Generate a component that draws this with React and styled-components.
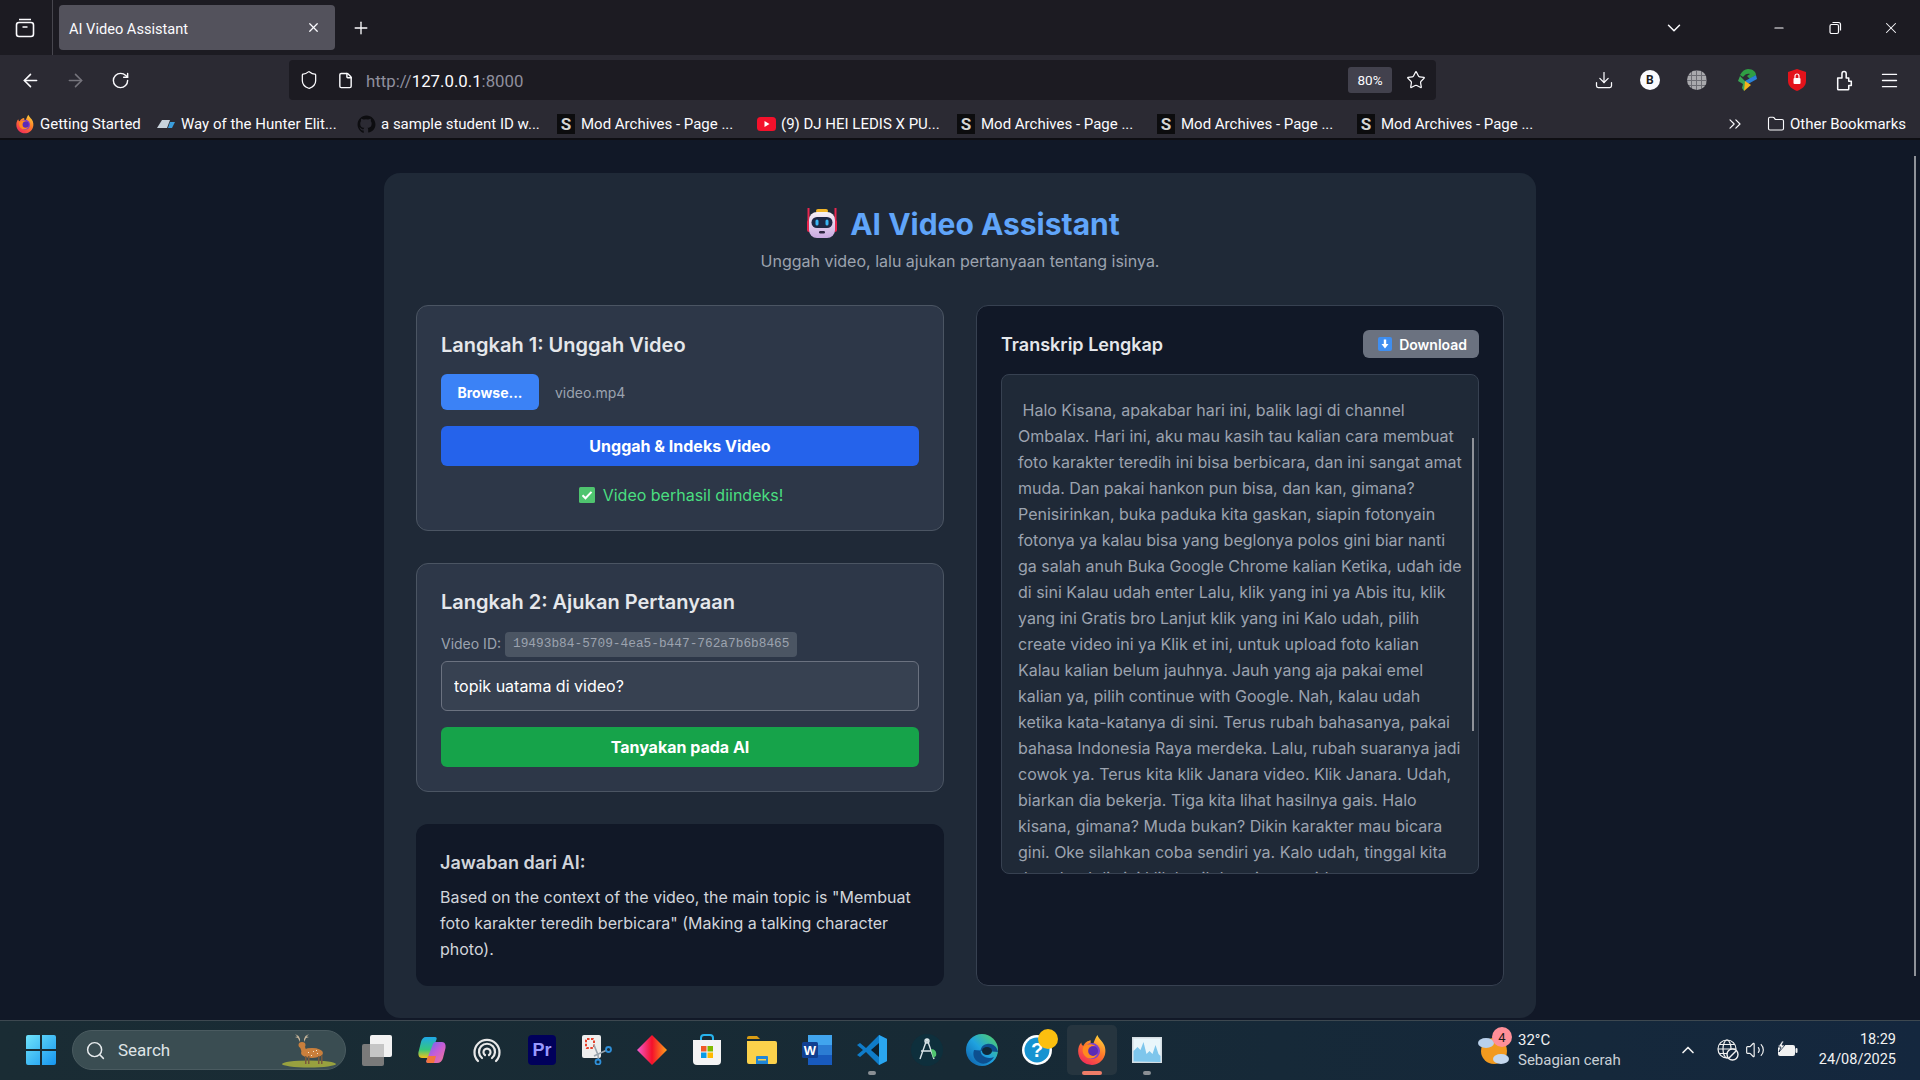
import React from 'react';
import styled, { createGlobalStyle } from 'styled-components';
import {
  ArrowLeft, ArrowRight, RotateCw, Shield, File, Star, Download, Menu, Folder,
  ChevronDown, ChevronUp, ChevronsRight, Minus, X, Plus, Search, Volume2,
} from 'lucide-react';

const GlobalStyle = createGlobalStyle`
  html, body { margin: 0; padding: 0; height: 100%; overflow: hidden; background: #111827; }
  #root { height: 100%; }
  * { box-sizing: border-box; }
`;

const transcript = ` Halo Kisana, apakabar hari ini, balik lagi di channel Ombalax. Hari ini, aku mau kasih tau kalian cara membuat foto karakter teredih ini bisa berbicara, dan ini sangat amat muda. Dan pakai hankon pun bisa, dan kan, gimana? Penisirinkan, buka paduka kita gaskan, siapin fotonyain fotonya ya kalau bisa yang beglonya polos gini biar nanti ga salah anuh Buka Google Chrome kalian Ketika, udah ide di sini Kalau udah enter Lalu, klik yang ini ya Abis itu, klik yang ini Gratis bro Lanjut klik yang ini Kalo udah, pilih create video ini ya Klik et ini, untuk upload foto kalian Kalau kalian belum jauhnya. Jauh yang aja pakai emel kalian ya, pilih continue with Google. Nah, kalau udah ketika kata-katanya di sini. Terus rubah bahasanya, pakai bahasa Indonesia Raya merdeka. Lalu, rubah suaranya jadi cowok ya. Terus kita klik Janara video. Klik Janara. Udah, biarkan dia bekerja. Tiga kita lihat hasilnya gais. Halo kisana, gimana? Muda bukan? Dikin karakter mau bicara gini. Oke silahkan coba sendiri ya. Kalo udah, tinggal kita download di sini klik hasil dan simpan videonya ya guys`;

const bookmarks = [
  { label: 'Getting Started', icon: 'fx', width: 142 },
  { label: 'Way of the Hunter Elit...', icon: 'way' },
  { label: 'a sample student ID w...', icon: 'github' },
  { label: 'Mod Archives - Page ...', icon: 's' },
  { label: '(9) DJ HEI LEDIS X PU...', icon: 'yt' },
  { label: 'Mod Archives - Page ...', icon: 's' },
  { label: 'Mod Archives - Page ...', icon: 's' },
  { label: 'Mod Archives - Page ...', icon: 's' },
];

/* ---------- drawn icons ---------- */

const FirefoxIcon = ({ size = 30 }) => (
  <svg width={size} height={size} viewBox="0 0 30 30">
    <defs>
      <linearGradient id="fxa" x1="0.8" y1="0" x2="0.2" y2="1">
        <stop offset="0" stopColor="#ffd53a" />
        <stop offset="0.45" stopColor="#ff7a2a" />
        <stop offset="1" stopColor="#f0265c" />
      </linearGradient>
    </defs>
    <path d="M20 1c1 3 3 4 5 7 3 4 3 9 2 12-2 6-7 9-12 9C8 29 2 24 2 16c0-3 1-6 3-8 0 2 1 3 2 3 1-3 4-5 7-5-1 2 0 3 2 4 1-3 2-6 4-9z" fill="url(#fxa)" />
    <circle cx="15" cy="16" r="7.5" fill="#7a3fd0" />
    <path d="M7 12c3-3 8-3 11-1-3 0-5 1-5 3 0 3 6 2 7 5-2 4-7 5-10 3-3-2-5-6-3-10z" fill="#ff8a1f" />
    <circle cx="16" cy="16" r="4.6" fill="#5b2bb5" />
  </svg>
);

const RobotIcon = () => (
  <svg width="42" height="36" viewBox="-1 0 42 36">
    <defs>
      <linearGradient id="rb" x1="0" y1="0" x2="0" y2="1">
        <stop offset="0" stopColor="#f7f1f6" />
        <stop offset="1" stopColor="#c9a8e0" />
      </linearGradient>
    </defs>
    <rect x="6.5" y="3" width="2" height="14" fill="#e8264f" />
    <rect x="33.5" y="3" width="2" height="14" fill="#e8264f" />
    <rect x="6" y="15" width="4" height="12" rx="2" fill="#e8264f" />
    <rect x="32" y="15" width="4" height="12" rx="2" fill="#e8264f" />
    <rect x="15" y="4" width="12" height="4" rx="2" fill="#f0b429" />
    <rect x="8" y="7" width="26" height="26" rx="8" fill="url(#rb)" />
    <rect x="10.5" y="12" width="21" height="11" rx="5.5" fill="#1e2744" />
    <rect x="14.5" y="14.5" width="3" height="6" rx="1.5" fill="#38b6f5" />
    <rect x="24.5" y="14.5" width="3" height="6" rx="1.5" fill="#38b6f5" />
    <rect x="18" y="26" width="6" height="2.6" rx="1.3" fill="#2d2540" />
  </svg>
);

const CheckEmoji = () => (
  <svg width="16" height="16" viewBox="0 0 16 16">
    <rect width="16" height="16" rx="1.5" fill="#4fc46f" />
    <path d="M3.5 8.3l3 3 6-6.4" fill="none" stroke="#fff" strokeWidth="2" />
  </svg>
);

const DownEmoji = () => (
  <svg width="14" height="14" viewBox="0 0 14 14">
    <rect width="14" height="14" rx="2" fill="#3f8ef0" />
    <path d="M5.8 2.5h2.4v4.5h2.3L7 11.4 3.5 7h2.3z" fill="#fff" />
  </svg>
);

const TabListIcon = () => (
  <svg width="20" height="20" viewBox="0 0 20 20" fill="none" stroke="#fbfbfe" strokeWidth="1.6">
    <rect x="1.5" y="4.5" width="17" height="14" rx="2.5" />
    <path d="M4 1.5h12M7.5 9h5" />
  </svg>
);

const RestoreIcon = () => (
  <svg width="14" height="14" viewBox="0 0 14 14" fill="none" stroke="#fbfbfe" strokeWidth="1.2">
    <rect x="2" y="3.5" width="8.5" height="9" rx="1.5" />
    <path d="M4.5 1.5h6a2 2 0 0 1 2 2v6" />
  </svg>
);

const PuzzleIcon = () => (
  <svg width="17" height="21" viewBox="0 0 20 24" fill="none" stroke="#fbfbfe" strokeWidth="1.8" strokeLinejoin="round">
    <path d="M2 9h5V4a2.5 2.5 0 0 1 5 0v5h3v4h3v5h-3v4a1 1 0 0 1-1 1H3a1 1 0 0 1-1-1z" />
  </svg>
);

const IdmIcon = () => (
  <svg width="22" height="24" viewBox="0 0 22 24">
    <path d="M12 1c5 0 8 3 8 6l-6 4-3-3 3-2c-2-1-5 0-7 3L4 7c2-4 5-6 8-6z" fill="#2f9e44" />
    <path d="M20 7l1 4-9 5-3-3z" fill="#2a7fd6" />
    <path d="M4 8l5 5 3 3-4 7-2-3 1-4-5-3z" fill="#3aa655" />
    <path d="M9 13l6 4-7 6z" fill="#f2b41b" />
  </svg>
);

const BookmarkIcon = ({ kind }) => {
  if (kind === 'fx') return <FirefoxIcon size={20} />;
  if (kind === 'way') {
    return (
      <svg width="18" height="10" viewBox="0 0 18 10">
        <path d="M0 9L5 1h4L6 9zM6 9l3-8h4l-3 8z" fill="#c9d3dc" />
        <path d="M11 9l2-6h5l-3 6z" fill="#3a9ddc" />
      </svg>
    );
  }
  if (kind === 'github') {
    return (
      <svg width="19" height="19" viewBox="3.5 3.5 17 17">
        <path d="M12 4C7.6 4 4 7.6 4 12c0 3.5 2.3 6.5 5.5 7.6v-2.3c-2.2.5-2.7-1-2.7-1-.4-.9-.9-1.2-.9-1.2-.7-.5.1-.5.1-.5.8.1 1.2.8 1.2.8.7 1.2 1.9.9 2.3.7.1-.5.3-.9.5-1.1-1.8-.2-3.6-.9-3.6-4 0-.9.3-1.6.8-2.1-.1-.2-.4-1 .1-2.1 0 0 .7-.2 2.2.8a7.6 7.6 0 0 1 4 0c1.5-1 2.2-.8 2.2-.8.4 1.100.2 1.900.1 2.100.5.6.8 1.300.8 2.100 0 3.100-1.900 3.800-3.700 4 .3.3.6.8.6 1.500v2.700C17.700 18.500 20 15.500 20 12c0-4.400-3.600-8-8-8z" fill="#0d0d10" />
      </svg>
    );
  }
  if (kind === 'yt') {
    return (
      <svg width="19" height="14" viewBox="0 0 19 14">
        <rect width="19" height="14" rx="3.5" fill="#f4112b" />
        <path d="M7.5 4l5 3-5 3z" fill="#fff" />
      </svg>
    );
  }
  return <ModS>S</ModS>;
};

const WinLogo = () => (
  <svg width="30" height="30" viewBox="0 0 30 30">
    <defs>
      <linearGradient id="wn" x1="0" y1="0" x2="1" y2="1">
        <stop offset="0" stopColor="#6fe3fb" />
        <stop offset="1" stopColor="#1695ee" />
      </linearGradient>
    </defs>
    <path d="M0 2a2 2 0 0 1 2-2h12v14H0zM16 0h12a2 2 0 0 1 2 2v12H16zM0 16h14v14H2a2 2 0 0 1-2-2zM16 16h14v12a2 2 0 0 1-2 2H16z" fill="url(#wn)" />
  </svg>
);

const Deer = () => (
  <svg width="58" height="36" viewBox="0 0 58 36">
    <ellipse cx="28" cy="31" rx="27" ry="3.5" fill="#98a13f" />
    <path d="M19 9l-2-4-3-1 2.5-.5L14 1l3.5 2L19 6zM23 9l2-4 3-1-2.5-.5L28 1l-3.500 2L23 6z" fill="#c9b79c" />
    <ellipse cx="21" cy="12" rx="3.5" ry="3" fill="#c97f3c" />
    <path d="M19 14h5l2 5-5 1z" fill="#c97f3c" />
    <ellipse cx="31" cy="20" rx="11" ry="5" fill="#c97f3c" />
    <path d="M27 19h1v1h-1zM32 18h1v1h-1zM36 20h1v1h-1zM30 22h1v1h-1zM35 17h1v1h-1z" fill="#f6e7cf" />
    <path d="M24 23h1.5v8H24zM27 23h1.5v8H27zM37 23h1.5v8H37zM40 22h1.5v9H40z" fill="#7a5a3c" />
  </svg>
);

const Stacked = () => (
  <svg width="32" height="32" viewBox="0 0 32 32">
    <rect x="1" y="10" width="22" height="22" rx="2" fill="#7a7a7a" />
    <rect x="9" y="1" width="22" height="22" rx="2" fill="#f2f2f2" />
    <rect x="9" y="10" width="14" height="13" fill="#c6c6c6" />
  </svg>
);

const Copilot = () => (
  <svg width="28" height="28" viewBox="0 0 28 28">
    <defs>
      <linearGradient id="cpa" x1="0" y1="0" x2="0" y2="1">
        <stop offset="0" stopColor="#1fa8e8" />
        <stop offset="0.6" stopColor="#35c77e" />
        <stop offset="1" stopColor="#f2c21b" />
      </linearGradient>
      <linearGradient id="cpb" x1="0" y1="0" x2="1" y2="1">
        <stop offset="0" stopColor="#5b6df0" />
        <stop offset="0.5" stopColor="#c65cd8" />
        <stop offset="1" stopColor="#f6788c" />
      </linearGradient>
    </defs>
    <path d="M8 1h9c1.5 0 2 1 1.5 2.5L12 20c-.7 1.5-2 2-3 2H4c-3 0-4-3-3.500-6L3 6c.7-3 2.500-5 5-5z" fill="url(#cpa)" />
    <path d="M19 27h-9c-1.5 0-2-1-1.5-2.5L15 8c.7-1.5 2-2 3-2h6c3 0 4 3 3.500 6L25 22c-.7 3-3 5-6 5z" fill="url(#cpb)" />
    <path d="M10 20h8l-2 7h-6c-1.5 0-2-1-1.5-2.5z" fill="#f2763c" />
  </svg>
);

const Broadcast = () => (
  <svg width="28" height="28" viewBox="0 0 28 28" fill="none" stroke="#e8e8e8" strokeWidth="2.2" strokeLinecap="round">
    <path d="M5 25A12.5 12.5 0 1 1 23 25" />
    <path d="M9 22a8 8 0 1 1 10 0" />
    <path d="M12 19a3.5 3.5 0 1 1 4 0" />
  </svg>
);

const Premiere = () => <PrTile>Pr</PrTile>;

const Snip = () => (
  <svg width="30" height="30" viewBox="0 0 30 30">
    <rect x="0" y="0" width="19" height="23" rx="2" fill="#eeeeee" />
    <rect x="4" y="4" width="8" height="9" rx="1" fill="none" stroke="#e8412c" strokeWidth="2" strokeDasharray="2.5 1.5" />
    <path d="M12 10l4 10 .5 5M25 15l-13 6" fill="none" stroke="#9aa4ad" strokeWidth="1.6" />
    <circle cx="26.5" cy="14.5" r="2.5" fill="none" stroke="#2f8fd8" strokeWidth="1.8" />
    <circle cx="16" cy="27" r="2.5" fill="none" stroke="#2f8fd8" strokeWidth="1.8" />
  </svg>
);

const Diamond = () => (
  <svg width="30" height="30" viewBox="0 0 30 30">
    <defs>
      <linearGradient id="dm" x1="0" y1="0" x2="1" y2="0">
        <stop offset="0" stopColor="#f25bd0" />
        <stop offset="0.5" stopColor="#f4112b" />
        <stop offset="1" stopColor="#ffa21a" />
      </linearGradient>
    </defs>
    <path d="M15 0l15 15-15 15L0 15z" fill="url(#dm)" />
  </svg>
);

const StoreIcon = () => (
  <svg width="30" height="32" viewBox="0 0 30 32">
    <path d="M9 7V4a3 3 0 0 1 3-3h6a3 3 0 0 1 3 3v3" fill="none" stroke="#27b4ee" strokeWidth="2" />
    <path d="M1 6h28v21a4 4 0 0 1-4 4H5a4 4 0 0 1-4-4z" fill="#f4f4f4" />
    <rect x="9" y="12" width="5.5" height="5.5" fill="#f05a28" />
    <rect x="15.5" y="12" width="5.5" height="5.5" fill="#7fba00" />
    <rect x="9" y="18.5" width="5.5" height="5.5" fill="#0a9be6" />
    <rect x="15.5" y="18.5" width="5.5" height="5.5" fill="#ffb900" />
  </svg>
);

const FolderIcon = () => (
  <svg width="30" height="28" viewBox="0 0 30 28">
    <path d="M0 2a2 2 0 0 1 2-2h8l3 3h-13z" fill="#d99c13" />
    <path d="M0 5h28a2 2 0 0 1 2 2v19a2 2 0 0 1-2 2H2a2 2 0 0 1-2-2z" fill="#fbd14b" />
    <path d="M9 28v-7a1 1 0 0 1 1-1h10a1 1 0 0 1 1 1v7z" fill="#1f86d8" />
    <rect x="11" y="23" width="8" height="1.5" fill="#fbd14b" />
  </svg>
);

const WordIcon = () => (
  <svg width="30" height="30" viewBox="0 0 30 30">
    <rect x="6" y="0" width="24" height="10" fill="#41a5ee" />
    <rect x="6" y="10" width="24" height="10" fill="#2b7cd3" />
    <rect x="6" y="20" width="24" height="10" fill="#185abd" />
    <rect x="0" y="7" width="16" height="16" rx="1.5" fill="#103f91" />
    <text x="8" y="20" textAnchor="middle" fontFamily="Liberation Sans, sans-serif" fontWeight="700" fontSize="13" fill="#fff">W</text>
  </svg>
);

const VsCode = () => (
  <svg width="32" height="32" viewBox="0 0 32 32">
    <path d="M23 1l8 4v22l-8 4-13-13-6 5-3-2 6-5-6-5 3-2 6 5z" fill="#0f7cc9" />
    <path d="M23 1l8 4v22l-8 4z" fill="#2aa6f0" />
    <path d="M23 9l-8 7 8 7z" fill="#0d1f2b" />
  </svg>
);

const AndroidStudio = () => (
  <svg width="32" height="32" viewBox="0 0 32 32">
    <circle cx="16" cy="16" r="16" fill="#0e2f3c" />
    <path d="M16 5l-7 20M16 5l7 20M10 17h12" stroke="#d8e4e8" strokeWidth="1.4" fill="none" />
    <circle cx="16" cy="7" r="2" fill="none" stroke="#d8e4e8" strokeWidth="1.4" />
    <path d="M20 15c4 0 6 3 5 7l-3 2z" fill="#4fc46f" />
  </svg>
);

const EdgeIcon = () => (
  <svg width="32" height="34" viewBox="0 0 32 34">
    <defs>
      <linearGradient id="ed" x1="0" y1="1" x2="1" y2="0">
        <stop offset="0" stopColor="#0c59a4" />
        <stop offset="0.5" stopColor="#1fa2e0" />
        <stop offset="1" stopColor="#59d65a" />
      </linearGradient>
    </defs>
    <circle cx="16" cy="17" r="16" fill="url(#ed)" />
    <path d="M32 19c-1-6-6-9-11-8-6 1-8 7-5 11 3 3 8 4 12 2-3 5-9 8-14 6-5-2-8-7-6-13" fill="#0d4f8f" />
    <ellipse cx="21" cy="18" rx="5" ry="4" fill="#102838" />
  </svg>
);

const HelpIcon = () => (
  <svg width="44" height="44" viewBox="0 0 44 44">
    <circle cx="22" cy="22" r="15" fill="#fff" />
    <circle cx="22" cy="22" r="12.5" fill="#1793d1" />
    <text x="22" y="29" textAnchor="middle" fontFamily="Liberation Sans, sans-serif" fontWeight="700" fontSize="20" fill="#fff">?</text>
    <circle cx="33" cy="11" r="10" fill="#fbbf0f" />
  </svg>
);

const MonitorIcon = () => (
  <svg width="30" height="26" viewBox="0 0 30 26">
    <rect width="30" height="26" fill="#d5dde2" />
    <rect x="1.5" y="1.5" width="27" height="23" fill="#e9f6fb" />
    <path d="M1.5 24.5V14l4-4 3 3 3-8 3 12 3-3 3 3 3-9 3 9 2 2v6z" fill="#7ec6ec" />
  </svg>
);

const Weather = () => (
  <svg width="32" height="34" viewBox="0 0 32 34">
    <circle cx="16" cy="18" r="13" fill="#f29a1f" />
    <ellipse cx="8" cy="10" rx="8" ry="5" fill="#b9d0ea" />
    <ellipse cx="23" cy="26" rx="8" ry="5" fill="#c5d8ee" />
  </svg>
);

const GlobeOff = () => (
  <svg width="22" height="22" viewBox="0 0 22 22" fill="none" stroke="#f2f2f2" strokeWidth="1.2">
    <circle cx="10" cy="10" r="9" />
    <ellipse cx="10" cy="10" rx="4" ry="9" />
    <path d="M1 10h18M2.5 5.5h15M2.5 14.5h8" />
    <circle cx="15.5" cy="15.5" r="5.5" fill="#14273d" strokeWidth="1.4" />
    <path d="M12 19l7-7" strokeWidth="1.4" />
  </svg>
);

const BatteryIcon = () => (
  <svg width="22" height="18" viewBox="0 0 22 18">
    <rect x="2" y="4" width="17" height="11" rx="2" fill="#f2f2f2" />
    <rect x="19.5" y="7" width="2" height="5" rx="1" fill="#f2f2f2" />
    <path d="M6 0L2 6h3l-2 5 6-7H6l2-4z" fill="#f2f2f2" stroke="#14273d" strokeWidth="0.8" />
  </svg>
);

const taskbarItems = [
  { key: 'stack', node: <Stacked /> },
  { key: 'copilot', node: <Copilot /> },
  { key: 'cast', node: <Broadcast /> },
  { key: 'pr', node: <Premiere /> },
  { key: 'snip', node: <Snip /> },
  { key: 'diamond', node: <Diamond /> },
  { key: 'store', node: <StoreIcon /> },
  { key: 'folder', node: <FolderIcon /> },
  { key: 'word', node: <WordIcon /> },
  { key: 'code', node: <VsCode />, mark: 'open' },
  { key: 'studio', node: <AndroidStudio /> },
  { key: 'edge', node: <EdgeIcon /> },
  { key: 'help', node: <HelpIcon /> },
  { key: 'firefox', node: <FirefoxIcon size={32} />, mark: 'active' },
  { key: 'monitor', node: <MonitorIcon />, mark: 'open' },
];

const App = () => {
  return (
    <Screen>
      <GlobalStyle />

      <TabStrip>
        <TabListSlot><TabListIcon /></TabListSlot>
        <Tab>
          <TabTitle>AI Video Assistant</TabTitle>
          <X size={15} color="#fbfbfe" strokeWidth={2} />
        </Tab>
        <NewTab><Plus size={20} strokeWidth={1.6} color="#fbfbfe" /></NewTab>
        <WindowButtons>
          <ChevronSlot><ChevronDown size={22} strokeWidth={1.6} color="#fbfbfe" /></ChevronSlot>
          <WindowButton><Minus size={14} color="#fbfbfe" /></WindowButton>
          <WindowButton><RestoreIcon /></WindowButton>
          <WindowButton><X size={18} strokeWidth={1.4} color="#fbfbfe" /></WindowButton>
        </WindowButtons>
      </TabStrip>

      <Toolbar>
        <NavButton><ArrowLeft size={21} color="#fbfbfe" strokeWidth={1.8} /></NavButton>
        <NavButton><ArrowRight size={21} color="#75747c" strokeWidth={1.8} /></NavButton>
        <NavButton><RotateCw size={19} color="#fbfbfe" strokeWidth={1.8} /></NavButton>
        <UrlBar>
          <UrlIcon><Shield size={20} color="#fbfbfe" strokeWidth={1.5} /></UrlIcon>
          <UrlIcon><File size={17} color="#fbfbfe" strokeWidth={2} /></UrlIcon>
          <UrlText>http://<UrlHost>127.0.0.1</UrlHost>:8000</UrlText>
          <ZoomChip>80%</ZoomChip>
          <UrlIcon><Star size={20} color="#fbfbfe" strokeWidth={1.5} /></UrlIcon>
        </UrlBar>
        <ToolIcons>
          <ToolButton $w={45.5}><Download size={20} color="#fbfbfe" strokeWidth={1.5} /></ToolButton>
          <ToolButton $w={46.5}><RoundBadge>B</RoundBadge></ToolButton>
          <ToolButton $w={48.5}><GreyGlobe /></ToolButton>
          <ToolButton $w={50.5}><IdmIcon /></ToolButton>
          <ToolButton $w={49.5}>
            <svg width="18" height="22" viewBox="0 0 18 22">
              <path d="M9 0l9 3v9c0 5-4 8-9 10-5-2-9-5-9-10V3z" fill="#e3131b" />
              <rect x="5.5" y="9" width="7" height="6" rx="1" fill="#fff" />
              <path d="M7 9V7a2 2 0 0 1 4 0v2" fill="none" stroke="#fff" strokeWidth="1.2" />
            </svg>
          </ToolButton>
          <ToolButton $w={45.5}><PuzzleIcon /></ToolButton>
          <ToolButton $w={45}><Menu size={21} color="#fbfbfe" strokeWidth={1.6} /></ToolButton>
        </ToolIcons>
      </Toolbar>

      <BookmarksBar>
        {bookmarks.map((b, i) => (
          <Bookmark key={i} $width={b.width}>
            <BookmarkSlot $width={b.icon === 'fx' ? 25 : 24}><BookmarkIcon kind={b.icon} /></BookmarkSlot>
            <span>{b.label}</span>
          </Bookmark>
        ))}
        <BookmarksEnd>
          <ChevronsRight size={20} strokeWidth={1.4} color="#fbfbfe" />
          <OtherBookmarks>
            <Folder size={18} strokeWidth={1.5} color="#fbfbfe" />
            Other Bookmarks
          </OtherBookmarks>
        </BookmarksEnd>
      </BookmarksBar>

      <Page>
        <Card>
          <Header>
            <Title><RobotIcon /><TitleText>AI Video Assistant</TitleText></Title>
            <Subtitle>Unggah video, lalu ajukan pertanyaan tentang isinya.</Subtitle>
          </Header>

          <Columns>
            <LeftColumn>
              <Panel>
                <PanelTitle $low>Langkah 1: Unggah Video</PanelTitle>
                <FileRow>
                  <BrowseButton>Browse...</BrowseButton>
                  <FileName>video.mp4</FileName>
                </FileRow>
                <ActionButton $color="#2563eb">Unggah &amp; Indeks Video</ActionButton>
                <Status><CheckEmoji />Video berhasil diindeks!</Status>
              </Panel>

              <Panel>
                <PanelTitle>Langkah 2: Ajukan Pertanyaan</PanelTitle>
                <VideoId>Video ID: <VideoCode>19493b84-5709-4ea5-b447-762a7b6b8465</VideoCode></VideoId>
                <QuestionInput readOnly value="topik uatama di video?" />
                <ActionButton $color="#16a34a">Tanyakan pada AI</ActionButton>
              </Panel>

              <Answer>
                <AnswerTitle>Jawaban dari AI:</AnswerTitle>
                <AnswerText>
                  Based on the context of the video, the main topic is "Membuat foto karakter teredih berbicara" (Making a talking character photo).
                </AnswerText>
              </Answer>
            </LeftColumn>

            <TranscriptPanel>
              <TranscriptHead>
                <TranscriptTitle>Transkrip Lengkap</TranscriptTitle>
                <DownloadButton><DownEmoji />Download</DownloadButton>
              </TranscriptHead>
              <TranscriptBox>
                {transcript}
                <BoxThumb />
              </TranscriptBox>
            </TranscriptPanel>
          </Columns>
        </Card>
        <PageThumb />
      </Page>

      <Taskbar>
        <StartSlot><WinLogo /></StartSlot>
        <SearchPill>
          <Search size={21} color="#e8ecee" strokeWidth={1.7} />
          <SearchLabel>Search</SearchLabel>
          <DeerSlot><Deer /></DeerSlot>
        </SearchPill>
        <TaskIcons>
          {taskbarItems.map((item) => (
            <TaskSlot key={item.key} $active={item.mark === 'active'}>
              {item.node}
              {item.mark && <TaskMark $active={item.mark === 'active'} />}
            </TaskSlot>
          ))}
        </TaskIcons>
        <Tray>
          <WeatherIcon>
            <Weather />
            <WeatherBadge>4</WeatherBadge>
          </WeatherIcon>
          <WeatherText>
            <span>32°C</span>
            <WeatherSub>Sebagian cerah</WeatherSub>
          </WeatherText>
          <TrayChevron><ChevronUp size={20} strokeWidth={2} color="#f2f2f2" /></TrayChevron>
          <TraySlot $width={32}><GlobeOff /></TraySlot>
          <TraySlot $width={26} $right={4}><Volume2 size={20} strokeWidth={1.4} color="#f2f2f2" /></TraySlot>
          <TraySlot $width={32} $left={2}><BatteryIcon /></TraySlot>
          <Clock>
            <span>18:29</span>
            <span>24/08/2025</span>
          </Clock>
        </Tray>
      </Taskbar>
    </Screen>
  );
};

const chromeFont = `Roboto, "Noto Sans", sans-serif`;
const pageFont = `Inter, "Liberation Sans", sans-serif`;

const Screen = styled.div`
  height: 1080px;
  display: flex;
  flex-direction: column;
  overflow: hidden;
  font-family: ${chromeFont};
`;

/* browser chrome */

const TabStrip = styled.div`
  height: 55px;
  flex: none;
  display: flex;
  align-items: center;
  background: #1c1b22;
`;

const TabListSlot = styled.div`
  width: 53px;
  height: 55px;
  flex: none;
  display: flex;
  align-items: center;
  justify-content: center;
  padding-right: 2px;
  border-right: 1px solid #47464e;
`;

const Tab = styled.div`
  width: 276px;
  height: 45px;
  margin-left: 6px;
  padding: 0 14px 0 10px;
  display: flex;
  align-items: center;
  justify-content: space-between;
  border-radius: 4px;
  background: #53525c;
`;

const TabTitle = styled.span`
  padding-top: 2px;
  color: #fbfbfe;
  font-size: 14.6px;
`;

const NewTab = styled.div`
  width: 32px;
  margin-left: 10px;
  display: flex;
  justify-content: center;
`;

const WindowButtons = styled.div`
  margin-left: auto;
  display: flex;
  align-items: center;
  padding-right: 1px;
`;

const ChevronSlot = styled.div`
  width: 40px;
  margin-right: 57px;
  display: flex;
  justify-content: center;
`;

const WindowButton = styled.div`
  width: 56px;
  display: flex;
  justify-content: center;
`;

const Toolbar = styled.div`
  height: 50px;
  flex: none;
  display: flex;
  align-items: center;
  padding-left: 7.5px;
  background: #2b2a33;
`;

const NavButton = styled.div`
  width: 45px;
  display: flex;
  justify-content: center;
`;

const UrlBar = styled.div`
  width: 1147px;
  height: 40px;
  margin-left: 146.5px;
  padding: 0 2px;
  display: flex;
  align-items: center;
  border-radius: 4px;
  background: #1c1b22;
`;

const UrlIcon = styled.div`
  width: 36px;
  flex: none;
  display: flex;
  justify-content: center;
`;

const UrlText = styled.div`
  color: #8f8f9d;
  font-size: 16.8px;
  padding-left: 3px;
  padding-top: 1px;
`;

const UrlHost = styled.span`
  color: #fbfbfe;
`;

const ZoomChip = styled.div`
  width: 44px;
  height: 26px;
  margin-left: auto;
  margin-right: 6px;
  display: flex;
  align-items: center;
  justify-content: center;
  border-radius: 3px;
  background: #42414d;
  color: #fbfbfe;
  font-size: 13.5px;
`;

const ToolIcons = styled.div`
  margin-left: auto;
  padding-right: 8px;
  display: flex;
  align-items: center;
`;

const ToolButton = styled.div`
  width: ${(p) => p.$w}px;
  display: flex;
  justify-content: center;
`;

const RoundBadge = styled.div`
  width: 20px;
  height: 20px;
  display: flex;
  align-items: center;
  justify-content: center;
  border-radius: 50%;
  background: #fbfbfe;
  color: #1c1b22;
  font-size: 12px;
  font-weight: 700;
`;

const GreyGlobe = styled.div`
  width: 20px;
  height: 20px;
  border-radius: 50%;
  background:
    repeating-linear-gradient(0deg, transparent 0 4px, #6d6d74 4px 5px),
    repeating-linear-gradient(90deg, transparent 0 4px, #6d6d74 4px 5px),
    #a9a9ad;
`;

const BookmarksBar = styled.div`
  height: 33px;
  flex: none;
  display: flex;
  align-items: center;
  padding: 5px 0 0 15px;
  background: #2b2a33;
`;

const Bookmark = styled.div`
  width: ${(p) => p.$width || 200}px;
  flex: none;
  display: flex;
  align-items: center;
  color: #fbfbfe;
  font-size: 15px;
  white-space: nowrap;
`;

const BookmarkSlot = styled.div`
  width: ${(p) => p.$width}px;
  flex: none;
  display: flex;
  align-items: center;
`;

const ModS = styled.div`
  width: 18px;
  height: 20px;
  display: flex;
  align-items: center;
  justify-content: center;
  background: #0c0c0e;
  color: #d4d4d4;
  font-size: 17px;
  font-weight: 700;
`;

const BookmarksEnd = styled.div`
  margin-left: auto;
  padding-right: 14px;
  display: flex;
  align-items: center;
  gap: 22px;
`;

const OtherBookmarks = styled.div`
  display: flex;
  align-items: center;
  gap: 5px;
  color: #fbfbfe;
  font-size: 15px;
`;

/* the page itself */

const Page = styled.div`
  position: relative;
  height: 882px;
  flex: none;
  padding: 33.4px 0 0;
  border-top: 2px solid #0e0e13;
  overflow: hidden;
  background: #111827;
  font-family: ${pageFont};
`;

const PageThumb = styled.div`
  position: absolute;
  top: 16px;
  right: 4px;
  width: 2px;
  height: 820px;
  background: #8f9299;
`;

const Card = styled.div`
  width: 1152px;
  margin: 0 auto;
  padding: 32px;
  border-radius: 16px;
  background: #1f2937;
`;

const Header = styled.div`
  margin-bottom: 32px;
  text-align: center;
`;

const Title = styled.h1`
  margin: 0 0 8px;
  display: flex;
  align-items: center;
  justify-content: center;
  gap: 8px;
  color: #60a5fa;
  font-size: 30px;
  line-height: 36px;
  font-weight: 700;
`;

const TitleText = styled.span`
  padding-top: 2px;
  line-height: 34px;
`;

const Subtitle = styled.p`
  margin: 0;
  color: #9ca3af;
  font-size: 16px;
  line-height: 24px;
`;

const Columns = styled.div`
  display: grid;
  grid-template-columns: 528px 528px;
  gap: 32px;
`;

const LeftColumn = styled.div`
  display: flex;
  flex-direction: column;
  gap: 32px;
`;

const Panel = styled.section`
  padding: 24px;
  border: 1px solid #4b5563;
  border-radius: 12px;
  background: #2d3748;
`;

const PanelTitle = styled.h2`
  margin: 0 0 ${(p) => (p.$low ? 14 : 16)}px;
  color: #e5e7eb;
  font-size: 20px;
  line-height: ${(p) => (p.$low ? 30 : 28)}px;
  font-weight: 600;
`;

const FileRow = styled.div`
  display: flex;
  align-items: center;
  gap: 16px;
  margin-bottom: 16px;
`;

const BrowseButton = styled.div`
  width: 98px;
  height: 36px;
  display: flex;
  align-items: center;
  justify-content: center;
  border-radius: 6px;
  background: #3b82f6;
  color: #fff;
  font-size: 14px;
  font-weight: 700;
`;

const FileName = styled.span`
  color: #9ca3af;
  font-size: 14px;
`;

const ActionButton = styled.button`
  display: block;
  width: 100%;
  height: 40px;
  padding: 0;
  border: 0;
  border-radius: 6px;
  background: ${(p) => p.$color};
  color: #fff;
  font-family: inherit;
  font-size: 16px;
  font-weight: 700;
`;

const Status = styled.div`
  margin-top: 16px;
  padding: 2px 0 0 2px;
  display: flex;
  align-items: center;
  justify-content: center;
  gap: 8px;
  color: #4ade80;
  font-size: 16px;
  line-height: 22px;
`;

const VideoId = styled.div`
  height: 28px;
  display: flex;
  align-items: center;
  gap: 4px;
  color: #9ca3af;
  font-size: 14px;
  line-height: 20px;
  margin-top: -2px;
  margin-bottom: 3px;
`;

const VideoCode = styled.code`
  height: 25px;
  padding: 0 8px;
  display: flex;
  align-items: center;
  border-radius: 4px;
  background: #4b5563;
  color: #9ca3af;
  font-family: "Liberation Mono", monospace;
  font-size: 12.8px;
`;

const QuestionInput = styled.input`
  display: block;
  width: 100%;
  height: 50px;
  padding: 0 12px;
  margin-bottom: 16px;
  border: 1px solid #6b7280;
  border-radius: 6px;
  outline: 0;
  background: #374151;
  color: #fff;
  font-family: inherit;
  font-size: 16px;
`;

const Answer = styled.section`
  padding: 24px;
  border-radius: 12px;
  background: #111827;
`;

const AnswerTitle = styled.h3`
  margin: 0 0 6px;
  color: #d1d5db;
  font-size: 18px;
  line-height: 30px;
  font-weight: 600;
`;

const AnswerText = styled.p`
  margin: 0;
  color: #d1d5db;
  font-size: 16px;
  line-height: 26px;
`;

const TranscriptPanel = styled.section`
  padding: 24px;
  border: 1px solid #374151;
  border-radius: 12px;
  background: #111827;
`;

const TranscriptHead = styled.div`
  display: flex;
  align-items: center;
  justify-content: space-between;
  margin-bottom: 16px;
`;

const TranscriptTitle = styled.h2`
  margin: 0;
  padding-top: 2px;
  color: #e5e7eb;
  font-size: 18px;
  line-height: 26px;
  font-weight: 600;
`;

const DownloadButton = styled.div`
  height: 28px;
  padding: 0 12px 0 15px;
  display: flex;
  align-items: center;
  gap: 7px;
  border-radius: 6px;
  background: #6b7280;
  color: #fff;
  font-size: 14px;
  font-weight: 600;
`;

const TranscriptBox = styled.div`
  position: relative;
  height: 500px;
  padding: 22px 16px 16px;
  overflow: hidden;
  border: 1px solid #374151;
  border-radius: 8px;
  background: #1f2937;
  color: #9ca3af;
  font-size: 16px;
  line-height: 26px;
  white-space: pre-wrap;
`;

const BoxThumb = styled.div`
  position: absolute;
  top: 63px;
  right: 4px;
  width: 2px;
  height: 293px;
  background: #8f9299;
`;

/* windows taskbar */

const Taskbar = styled.div`
  height: 60px;
  flex: none;
  position: relative;
  display: flex;
  align-items: center;
  padding-left: 18px;
  padding-bottom: 1px;
  border-top: 1px solid #3d4850;
  background: linear-gradient(90deg, #1a2c34 0%, #172a35 50%, #14273e 100%);
`;

const StartSlot = styled.div`
  width: 45px;
  margin-right: 9px;
  display: flex;
  justify-content: center;
`;

const SearchPill = styled.div`
  position: relative;
  width: 274px;
  height: 40px;
  padding-left: 12px;
  display: flex;
  align-items: center;
  gap: 12px;
  border: 1px solid #4a5b60;
  border-radius: 20px;
  background: #3a4d52;
`;

const SearchLabel = styled.span`
  color: #dfe4e6;
  font-size: 17px;
`;

const DeerSlot = styled.div`
  position: absolute;
  right: 6px;
  top: 2px;
  display: flex;
`;

const TaskIcons = styled.div`
  margin-left: 3.5px;
  display: flex;
  align-items: center;
`;

const TaskSlot = styled.div`
  position: relative;
  width: 55px;
  height: 50px;
  display: flex;
  align-items: center;
  justify-content: center;
  &::before {
    content: '';
    position: absolute;
    top: 0;
    bottom: 0;
    left: 2.5px;
    right: 2.5px;
    border-radius: 5px;
    background: ${(p) => (p.$active ? '#26353f' : 'transparent')};
  }
  & > svg, & > div { position: relative; }
`;

const TaskMark = styled.div`
  && { position: absolute; }
  bottom: 0;
  left: 50%;
  width: ${(p) => (p.$active ? 20 : 8)}px;
  height: 4px;
  transform: translateX(-50%);
  border-radius: 2px;
  background: ${(p) => (p.$active ? '#ee7d68' : '#8a8f94')};
`;

const PrTile = styled.div`
  width: 28px;
  height: 30px;
  display: flex;
  align-items: center;
  justify-content: center;
  border-radius: 4px;
  background: #00005b;
  color: #9999ff;
  font-family: "Liberation Sans", sans-serif;
  font-size: 18px;
  font-weight: 700;
`;

const Tray = styled.div`
  margin-left: auto;
  padding-right: 24px;
  display: flex;
  align-items: center;
`;

const WeatherIcon = styled.div`
  position: relative;
  width: 40px;
  display: flex;
`;

const WeatherBadge = styled.div`
  position: absolute;
  top: -6px;
  left: 14px;
  width: 20px;
  height: 20px;
  display: flex;
  align-items: center;
  justify-content: center;
  border-radius: 50%;
  background: #ff8f98;
  color: #1a1a1a;
  font-size: 13px;
`;

const WeatherText = styled.div`
  width: 104px;
  display: flex;
  flex-direction: column;
  gap: 2px;
  color: #f2f2f2;
  font-size: 15px;
  line-height: 18px;
`;

const WeatherSub = styled.span`
  color: #c9d0d6;
`;

const TrayChevron = styled.div`
  width: 36px;
  margin-left: 48px;
  margin-right: 6px;
  display: flex;
  justify-content: center;
`;

const TraySlot = styled.div`
  width: ${(p) => p.$width}px;
  padding-left: ${(p) => p.$left || 0}px;
  padding-right: ${(p) => p.$right || 0}px;
  display: flex;
  justify-content: center;
`;

const Clock = styled.div`
  width: 94px;
  display: flex;
  flex-direction: column;
  align-items: flex-end;
  gap: 2px;
  color: #f2f2f2;
  font-size: 14.5px;
  line-height: 18px;
`;

export default App;
